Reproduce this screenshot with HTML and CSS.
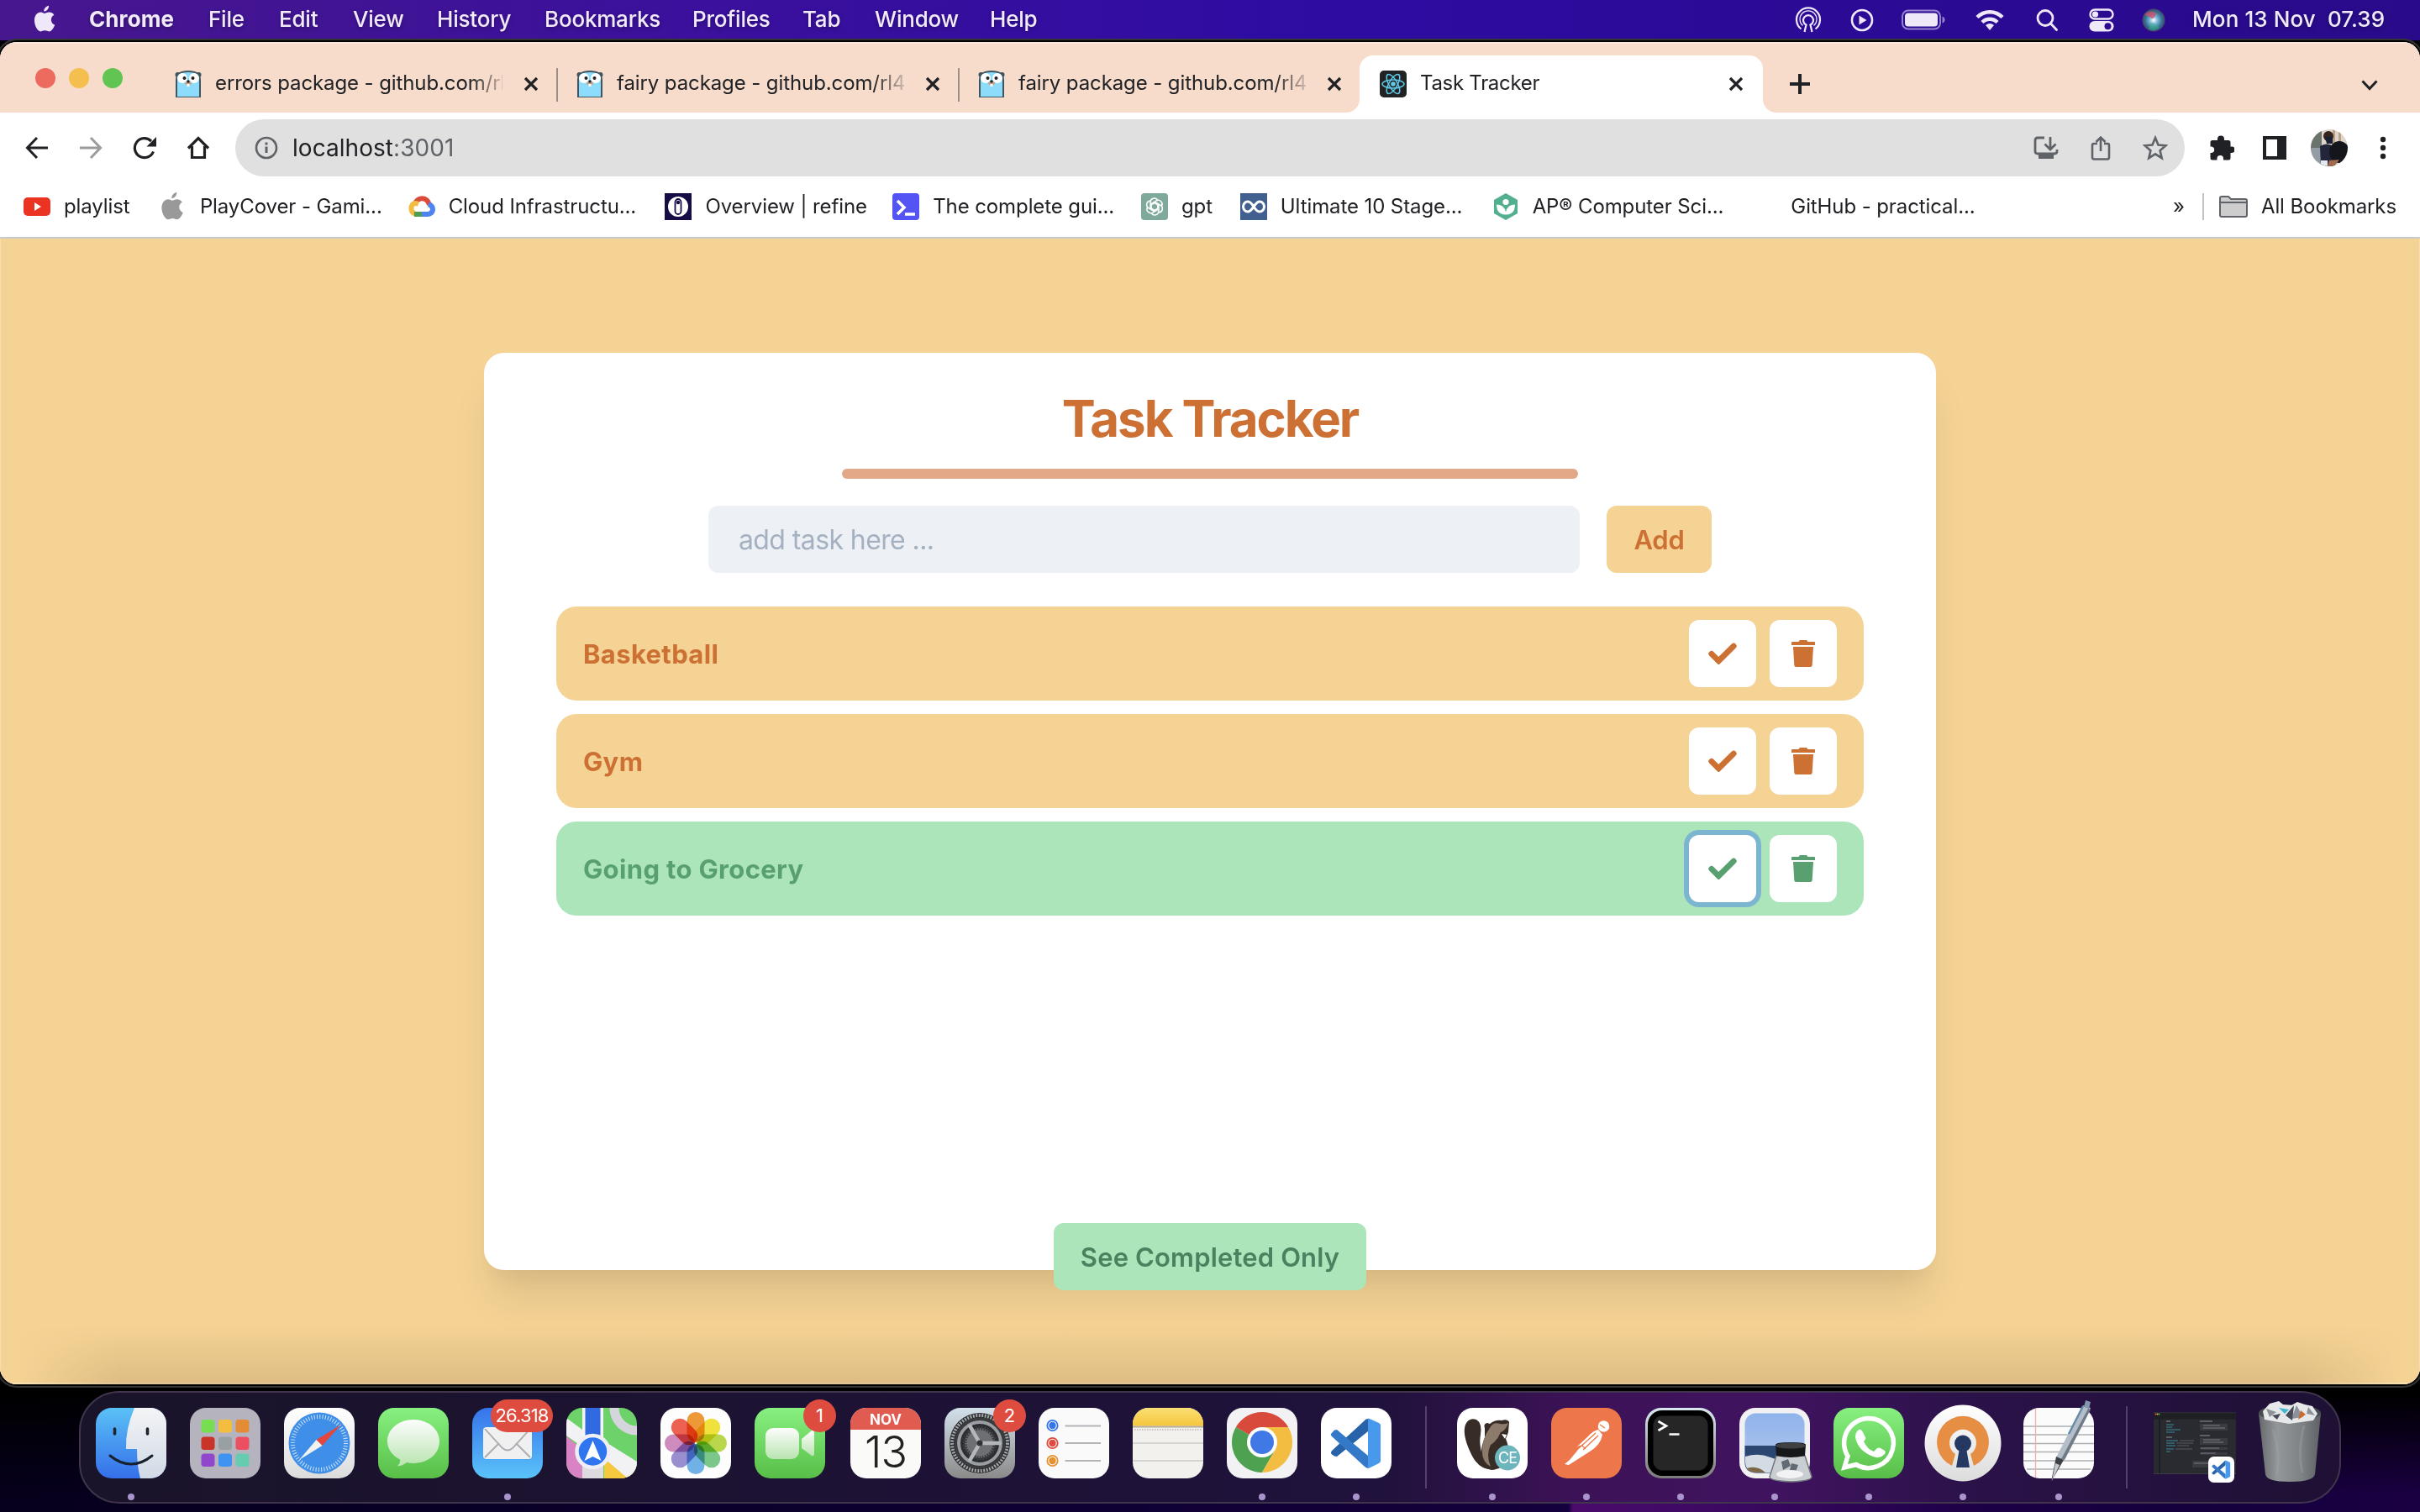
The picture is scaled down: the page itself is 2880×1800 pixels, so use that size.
FILE: index.html
```html
<!DOCTYPE html>
<html lang="en">
<head>
<meta charset="utf-8">
<title>Task Tracker</title>
<link rel="stylesheet" href="styles.css">
</head>
<body>
<svg class="defs" aria-hidden="true">
  <defs>
    <linearGradient id="gGreen" x1="0" y1="0" x2="0" y2="1"><stop offset="0" stop-color="#87f080"/><stop offset="1" stop-color="#58be48"/></linearGradient>
    <linearGradient id="gBlue" x1="0" y1="0" x2="0" y2="1"><stop offset="0" stop-color="#5ac1f6"/><stop offset="1" stop-color="#356fea"/></linearGradient>
    <linearGradient id="gMail" x1="0" y1="0" x2="0" y2="1"><stop offset="0" stop-color="#3674ea"/><stop offset="1" stop-color="#5ac3fa"/></linearGradient>
    <linearGradient id="gWhite" x1="0" y1="0" x2="0" y2="1"><stop offset="0" stop-color="#fff"/><stop offset="1" stop-color="#dcdcdc"/></linearGradient>
    <linearGradient id="gFace" x1="0" y1="0" x2="0" y2="1"><stop offset="0" stop-color="#f4f4f6"/><stop offset="1" stop-color="#d0dae6"/></linearGradient>
    <linearGradient id="gBubble" x1="0" y1="0" x2="0" y2="1"><stop offset="0" stop-color="#fdfdfd"/><stop offset="1" stop-color="#b9e4b0"/></linearGradient>
    <linearGradient id="gGear" x1="0" y1="0" x2="0" y2="1"><stop offset="0" stop-color="#d3e0ea"/><stop offset="1" stop-color="#8b8a8a"/></linearGradient>
    <linearGradient id="gNote" x1="0" y1="0" x2="0" y2="1"><stop offset="0" stop-color="#fadf74"/><stop offset="1" stop-color="#f6c63c"/></linearGradient>
    <linearGradient id="gTerm" x1="0" y1="0" x2="0" y2="1"><stop offset="0" stop-color="#d8e8ee"/><stop offset="1" stop-color="#7d7a7a"/></linearGradient>
    <linearGradient id="gSky" x1="0" y1="0" x2="0" y2="1"><stop offset="0" stop-color="#8fb3ec"/><stop offset="1" stop-color="#b5c8ec"/></linearGradient>
    <linearGradient id="gBin" x1="0" y1="0" x2="1" y2="0"><stop offset="0" stop-color="#66696c"/><stop offset=".3" stop-color="#93979a"/><stop offset=".7" stop-color="#7d8184"/><stop offset="1" stop-color="#5d6064"/></linearGradient>
    <radialGradient id="gSiri" cx=".5" cy=".5" r=".5"><stop offset="0" stop-color="#fff"/><stop offset=".35" stop-color="#7fb6d8"/><stop offset=".75" stop-color="#31708f"/><stop offset="1" stop-color="#4a4464"/></radialGradient>
    <clipPath id="tile"><rect width="84" height="84" rx="19"/></clipPath>
    <clipPath id="disc"><circle cx="22" cy="22" r="22"/></clipPath>
    <symbol id="gopher" viewBox="0 0 32 32">
      <circle cx="3.500" cy="5" r="3" fill="#3f5560"/><circle cx="28.500" cy="5" r="3" fill="#3f5560"/>
      <path d="M2 32V11C2 4 8 1 16 1s14 3 14 10v21z" fill="#8ddcfb" stroke="#3f5560" stroke-width="2"/>
      <circle cx="9" cy="9" r="6" fill="#fff"/><circle cx="23" cy="9" r="6" fill="#fff"/>
      <circle cx="11.500" cy="9" r="2" fill="#222"/><circle cx="21.500" cy="9" r="2" fill="#222"/>
      <ellipse cx="16" cy="15" rx="4" ry="2.500" fill="#c9a48c"/><circle cx="16" cy="13" r="1.700" fill="#222"/><rect x="14.500" y="16" width="3" height="3" fill="#fff"/>
    </symbol>
    <symbol id="cross" viewBox="0 0 18 18"><path d="M2 2l14 14M16 2L2 16" stroke="#202124" stroke-width="3.200"/></symbol>
    <symbol id="apple" viewBox="0 0 28 34"><path d="M19.500 0c.3 3.600-2.700 7.300-6.200 7.300C12.900 3.900 16 .7 19.500 0zM13.900 10c1.300 0 3.200-1.600 6-1.600 2.500 0 4.900 1.300 6.300 3.400-5.500 3.200-4.600 10.700 1 13-1.300 3.500-4.300 8.400-7.200 8.400-2 0-2.900-1.300-5.600-1.300-2.700 0-3.700 1.300-5.600 1.300C5.400 33.200 1 25.700 1 19c0-6.700 4-10.600 8-10.600 2.400 0 3.900 1.600 4.900 1.600z"/></symbol>
    <symbol id="check" viewBox="0 0 32 24"><path d="M3.600 12.300l8 8L28.400 3.600" fill="none" stroke="currentColor" stroke-width="6.500" stroke-linecap="round" stroke-linejoin="miter"/></symbol>
    <symbol id="trash" viewBox="0 0 28 32"><path fill="currentColor" d="M1 2h7.500L10 0h8l1.500 2H27q1 0 1 1v3H0V3q0-1 1-1zM2 8h24l-1.300 22q-.2 2-2.200 2h-17q-2 0-2.200-2z"/></symbol>
    <symbol id="vscode" viewBox="0 0 84 84">
      <path d="M12 53v1q0 1 4 3.500l3 .5L56 28V13q-3 0-5 3L13 51z" fill="#2862a8"/>
      <path d="M16 26.500L12 31q-1 1 1 3l38 35q3 3 5 3V57L19 26z" fill="#3478c8"/>
      <path d="M56 12.500q1 0 3 1l10 4.500q2 1 2 3v42q0 2-2 3l-10 5q-2 1-3 1z" fill="#4899ec"/>
    </symbol>
  </defs>
</svg>

<header class="menubar">
  <svg class="apple" width="26" height="33"><use href="#apple"/></svg>
  <nav class="menus">
    <span class="m1">Chrome</span><span class="m2">File</span><span class="m3">Edit</span><span class="m4">View</span><span class="m5">History</span><span class="m6">Bookmarks</span><span class="m7">Profiles</span><span class="m8">Tab</span><span class="m9">Window</span><span>Help</span>
  </nav>
  <div class="status">
    <svg width="32" height="32" viewBox="0 0 32 32" fill="none" stroke="#efe8f8" stroke-width="2.200"><path d="M11.500 30l2-8.500a6 6 0 1 1 5 0l2 8.500"/><path d="M7.500 26.500a14 14 0 1 1 17 0"/><path d="M9.500 22.500a10 10 0 1 1 13 0" stroke-width="1.200"/></svg>
    <svg class="s2" width="28" height="28" viewBox="0 0 28 28"><circle cx="14" cy="14" r="12" fill="none" stroke="#efe8f8" stroke-width="2.600"/><path d="M10.500 8.500v11l9-5.500z" fill="#efe8f8"/></svg>
    <svg class="s3" width="52" height="26" viewBox="0 0 52 26"><rect x="1" y="1.500" width="45" height="22" rx="7" fill="none" stroke="#9382cc" stroke-width="2"/><rect x="4" y="4.500" width="39" height="16" rx="4" fill="#efe8f8"/><path d="M48.500 8.500q3 1 3 4t-3 4z" fill="#9382cc"/></svg>
    <svg class="s4" width="34" height="26" viewBox="0 0 34 26" fill="none" stroke="#efe8f8" stroke-width="4.500"><path d="M2 9.500a21 21 0 0 1 30 0M8 15.500a12.600 12.600 0 0 1 18 0"/><path d="M12 19q5-4 10 0l-5 6z" fill="#efe8f8" stroke="none"/></svg>
    <svg class="s5" width="26" height="26" viewBox="0 0 26 26" fill="none" stroke="#efe8f8" stroke-width="2.800"><circle cx="11" cy="10.500" r="9"/><path d="M17.500 17l7 7.500" stroke-linecap="round"/></svg>
    <svg class="s6" width="30" height="28" viewBox="0 0 30 28"><rect x="1.500" y="1.500" width="27" height="11" rx="5.500" fill="none" stroke="#efe8f8" stroke-width="2.400"/><circle cx="7.500" cy="7" r="3.600" fill="#efe8f8"/><rect x=".5" y="15" width="29" height="12.500" rx="6.200" fill="#efe8f8"/><circle cx="22.500" cy="21.200" r="4" fill="#2c0a90"/></svg>
    <svg class="s7" width="28" height="28" viewBox="0 0 28 28"><circle cx="14" cy="14" r="13.500" fill="url(#gSiri)"/><path d="M3 8q8-8 14-2-2 6-5 6-5-4-9-4z" fill="#d84a68" opacity=".75"/><path d="M10 17q6 0 11 6-7 6-13 1z" fill="#2fb68a" opacity=".5"/></svg>
    <span class="clock">Mon 13 Nov&nbsp; 07.39</span>
  </div>
</header>

<main class="window">
  <div class="tabstrip">
    <div class="lights"><i class="red"></i><i class="yellow"></i><i class="green"></i></div>
    <div class="tab"><svg width="32" height="32"><use href="#gopher"/></svg><span class="fade">errors package - github.com/rl4</span><svg width="18" height="18"><use href="#cross"/></svg></div>
    <i class="divider"></i>
    <div class="tab"><svg width="32" height="32"><use href="#gopher"/></svg><span class="fade">fairy package - github.com/rl4</span><svg width="18" height="18"><use href="#cross"/></svg></div>
    <i class="divider"></i>
    <div class="tab last"><svg width="32" height="32"><use href="#gopher"/></svg><span class="fade">fairy package - github.com/rl4</span><svg width="18" height="18"><use href="#cross"/></svg></div>
    <div class="tab active">
      <svg width="32" height="32" viewBox="0 0 32 32"><rect width="32" height="32" rx="5" fill="#212224"/><g fill="none" stroke="#61c9e8" stroke-width="1.500"><ellipse cx="16" cy="16" rx="13" ry="5"/><ellipse cx="16" cy="16" rx="13" ry="5" transform="rotate(60 16 16)"/><ellipse cx="16" cy="16" rx="13" ry="5" transform="rotate(120 16 16)"/></g><circle cx="16" cy="16" r="2.800" fill="#61c9e8"/></svg>
      <span>Task Tracker</span><svg width="18" height="18"><use href="#cross"/></svg>
    </div>
    <svg class="plus" width="24" height="24"><path d="M12 0v24M0 12h24" stroke="#202124" stroke-width="4"/></svg>
    <svg class="chev" width="20" height="13" fill="none" stroke="#202124" stroke-width="3"><path d="M1.500 1.500L10 10.500l8.500-9"/></svg>
  </div>

  <div class="toolbar">
    <svg width="28" height="28" fill="none" stroke="#202124" stroke-width="3"><path d="M14 2L2.500 14 14 26M2 14h25"/></svg>
    <svg width="28" height="28" fill="none" stroke="#9b9c9e" stroke-width="3"><path d="M14 2l11.500 12L14 26M1 14h25"/></svg>
    <svg width="28" height="28" fill="none" stroke="#202124" stroke-width="3.200"><path d="M24.500 18.500A11.500 11.500 0 1 1 22 6"/><path d="M28 1v11.500H16.500z" fill="#202124" stroke="none"/></svg>
    <svg width="28" height="28" fill="none" stroke="#202124" stroke-width="3.200"><path d="M2 14.500L14 2.500l12 12M6.500 12v13.500h15V12"/></svg>
    <div class="omnibox">
      <svg width="28" height="28"><circle cx="14" cy="14" r="12" fill="none" stroke="#5f6368" stroke-width="2.600"/><path d="M14 12.500V20M14 7.500v3" stroke="#5f6368" stroke-width="3"/></svg>
      <span class="url">localhost<em>:3001</em></span>
      <svg class="oi" width="30" height="30" fill="none" stroke="#5f6368" stroke-width="2.800"><path d="M13 3H5Q2 3 2 6v13q0 3 3 3h20q3 0 3-3v-2"/><path d="M20 2v14M13.500 10.500l6.500 6.500 6.500-6.500"/><path d="M6 23h18v5H6z" fill="#5f6368" stroke="none"/></svg>
      <svg class="oi" width="24" height="30" fill="none" stroke="#5f6368" stroke-width="2.600"><path d="M8 10H4q-2 0-2 2v14q0 2.500 2 2.500h16q2 0 2-2.500V12q0-2-2-2h-4M12 19V3M6.500 8L12 2.500 17.500 8"/></svg>
      <svg class="oi" width="30" height="30" viewBox="0 0 30 30" fill="none" stroke="#5f6368" stroke-width="2.600"><path d="M15 3l3.500 8.500 9 .8-6.900 6 2.100 8.900-7.700-4.800-7.700 4.800 2.100-8.900-6.900-6 9-.8z"/></svg>
    </div>
    <svg class="t1" width="30" height="30" viewBox="0 0 30 30"><path fill="#202124" d="M10 4.500a4 4 0 0 1 8 0V6h5q2.500 0 2.500 2.500v5H27a3.700 3.700 0 0 1 0 7.500h-1.500v6q0 2.500-2.500 2.500h-6v-1.700a3.700 3.700 0 0 0-7.500 0v1.700H4Q1.500 29.500 1.500 27v-6H3a3.800 3.800 0 0 0 0-7.500H1.500v-5Q1.500 6 4 6h6z"/></svg>
    <svg class="t2" width="28" height="28"><path fill="#202124" fill-rule="evenodd" d="M0 0h28v28H0zM4 4v20h13V4z"/></svg>
    <svg class="t3" width="44" height="44"><g clip-path="url(#disc)"><rect width="44" height="44" fill="#ded6cc"/><rect width="13" height="24" fill="#6b746c"/><rect y="22" width="12" height="22" fill="#949ca4"/><path d="M26 0h3v18h-3zM33 0h3v18h-3z" fill="#b99f84"/><path d="M11 20q8-5 16 0l2 24H12z" fill="#23263a"/><circle cx="21" cy="8" r="6" fill="#33241e"/><path d="M17 9h9v8h-7z" fill="#1a2034"/><ellipse cx="34" cy="27" rx="12" ry="13" fill="#15161c"/><path d="M22 37l12-1-6 8h-8z" fill="#a26b50"/><path d="M12 37h8v7h-8z" fill="#e4e8f0"/></g></svg>
    <svg class="t4" width="8" height="28"><g fill="#202124"><circle cx="4" cy="4" r="3.200"/><circle cx="4" cy="14" r="3.200"/><circle cx="4" cy="24" r="3.200"/></g></svg>
  </div>

  <div class="bookmarks">
    <div class="bm b1"><svg width="32" height="32"><rect y="5" width="32" height="22" rx="5" fill="#ea3323"/><path d="M13 11v10l8-5z" fill="#fff"/></svg><span>playlist</span></div>
    <div class="bm b2"><svg width="32" height="34" fill="#999"><use href="#apple" x="1" width="28" height="33"/></svg><span>PlayCover - Gami...</span></div>
    <div class="bm b3"><svg width="32" height="32" fill="none" stroke-width="6"><path d="M8.500 11.500A8.500 8.500 0 0 1 23 9.500l2 4" stroke="#da4b3a"/><path d="M12 13q-7-3-8.500 4-.5 6 5 8" stroke="#f2bc42"/><path d="M7 25h9" stroke="#4f9d55"/><path d="M16 25h7q6-1 6-6 0-4-5-6" stroke="#4d84ee"/></svg><span>Cloud Infrastructu...</span></div>
    <div class="bm b4"><svg width="32" height="32"><rect width="32" height="32" fill="#170d44"/><circle cx="16" cy="16" r="12" fill="#fff"/><rect x="12.500" y="7" width="7" height="18" rx="3.500" fill="#fff" stroke="#170d44" stroke-width="1.800"/><circle cx="16" cy="11" r="2.200" fill="#170d44"/></svg><span>Overview | refine</span></div>
    <div class="bm b5"><svg width="32" height="32"><rect width="32" height="32" rx="4" fill="#5454f4"/><path d="M6 9l8 8-8 8M15 25h12" fill="none" stroke="#fff" stroke-width="3.600"/></svg><span>The complete gui...</span></div>
    <div class="bm b6"><svg width="32" height="32"><rect width="32" height="32" rx="4" fill="#7fa99b"/><g fill="none" stroke="#fff" stroke-width="1.500"><path id="petal" d="M16 20.500l-5-3v-7a4.700 4.700 0 0 1 8.500-2.500"/><use href="#petal" transform="rotate(60 16 16)"/><use href="#petal" transform="rotate(120 16 16)"/><use href="#petal" transform="rotate(180 16 16)"/><use href="#petal" transform="rotate(240 16 16)"/><use href="#petal" transform="rotate(300 16 16)"/></g></svg><span>gpt</span></div>
    <div class="bm b7"><svg width="32" height="32"><rect width="32" height="32" fill="#41608f"/><path d="M16 16c-3-5-5-6-7-6a5.500 6 0 0 0 0 12c3 0 4-2 7-6s4-6 7-6a5.500 6 0 0 1 0 12c-2 0-4-1-7-6z" fill="none" stroke="#fff" stroke-width="3"/></svg><span>Ultimate 10 Stage...</span></div>
    <div class="bm b8"><svg width="32" height="32"><path d="M16 0l14 8v16l-14 8L2 24V8z" fill="#53b08f"/><circle cx="16" cy="10.500" r="3.600" fill="#fff"/><path d="M5 13.500q9 0 11 9 2-9 11-9 0 12-11 12T5 13.500z" fill="#fff"/></svg><span>AP® Computer Sci...</span></div>
    <div class="bm b9"><span>GitHub - practical...</span></div>
    <span class="more">»</span>
    <i class="bsep"></i>
    <div class="bm b10"><svg width="34" height="26"><path d="M1 23V3q0-2 2-2h8l3 3h17q2 0 2 2v17q0 2-2 2H3q-2 0-2-2z" fill="#cdcdcd" stroke="#5f6368" stroke-width="2"/><path d="M2 8h30" stroke="#5f6368" stroke-width="2"/></svg><span>All Bookmarks</span></div>
  </div>

  <section class="page">
    <div class="card">
      <h1>Task Tracker</h1>
      <div class="rule"></div>
      <form class="entry">
        <input class="field" type="text" placeholder="add task here ...">
        <button class="add" type="button">Add</button>
      </form>
      <ul class="tasks">
        <li class="task"><span>Basketball</span><button type="button"><svg width="34" height="26"><use href="#check"/></svg></button><button type="button"><svg width="28" height="32"><use href="#trash"/></svg></button></li>
        <li class="task"><span>Gym</span><button type="button"><svg width="34" height="26"><use href="#check"/></svg></button><button type="button"><svg width="28" height="32"><use href="#trash"/></svg></button></li>
        <li class="task done"><span>Going to Grocery</span><button class="focused" type="button"><svg width="34" height="26"><use href="#check"/></svg></button><button type="button"><svg width="28" height="32"><use href="#trash"/></svg></button></li>
      </ul>
      <button class="filter" type="button">See Completed Only</button>
    </div>
  </section>
</main>

<footer class="dock">
  <div class="app open"><svg viewBox="0 0 84 84"><g clip-path="url(#tile)"><rect width="84" height="84" fill="url(#gBlue)"/><path d="M46 0Q35 26 36 49h13q0 20 4 35h31V0z" fill="url(#gFace)"/></g><path d="M22.500 25v6M61.500 25v6" stroke="#1c2530" stroke-width="3.600" stroke-linecap="round"/><path d="M17 57q25 20 50 0" fill="none" stroke="#17202c" stroke-width="3" stroke-linecap="round"/></svg></div>
  <div class="app"><svg viewBox="0 0 84 84"><rect width="84" height="84" rx="19" fill="#b5b3bd"/><g><rect x="13.500" y="14" width="16" height="15.500" rx="3.500" fill="#77de52"/><rect x="34" y="14" width="16" height="15.500" rx="3.500" fill="#f3be3f"/><rect x="54.500" y="14" width="16" height="15.500" rx="3.500" fill="#e48b35"/><rect x="13.500" y="34.500" width="16" height="15.500" rx="3.500" fill="#c93328"/><rect x="34" y="34.500" width="16" height="15.500" rx="3.500" fill="#99a0a4"/><rect x="54.500" y="34.500" width="16" height="15.500" rx="3.500" fill="#ec5060"/><rect x="13.500" y="54.500" width="16" height="15.500" rx="3.500" fill="#9147cb"/><rect x="34" y="54.500" width="16" height="15.500" rx="3.500" fill="#3f94f2"/><rect x="54.500" y="54.500" width="16" height="15.500" rx="3.500" fill="#65ccb0"/></g></svg></div>
  <div class="app"><svg viewBox="0 0 84 84"><rect width="84" height="84" rx="19" fill="url(#gWhite)"/><circle cx="42" cy="42" r="36.500" fill="#3f8fe8"/><circle cx="42" cy="42" r="31.500" fill="none" stroke="#cfe4fa" stroke-width="5" stroke-dasharray="1 2.300"/><path d="M68 20L38.500 38l7 7z" fill="#e5463b"/><path d="M18 62l20.500-24 7 7z" fill="#f2f2f2"/></svg></div>
  <div class="app"><svg viewBox="0 0 84 84"><rect width="84" height="84" rx="19" fill="url(#gGreen)"/><path d="M42 14c17 0 31 11 31 26S59 66 42 66q-4 0-8-1-5 4-11 4.500 4-4 3-8C17 57 11 49 11 40c0-15 14-26 31-26z" fill="url(#gBubble)"/></svg></div>
  <div class="app open"><svg viewBox="0 0 84 84"><rect width="84" height="84" rx="19" fill="url(#gMail)"/><rect x="13" y="23" width="58" height="38" rx="4" fill="#f0f0f0"/><path d="M15 59l17-17M69 59L52 42M15 25l21 23q6 5 12 0l21-23" fill="none" stroke="#a9acb0" stroke-width="1.800"/></svg><span class="badge wide">26.318</span></div>
  <div class="app"><svg viewBox="0 0 84 84"><g clip-path="url(#tile)"><rect width="84" height="84" fill="#6ed26b"/><path d="M0 34l30 24v26H0z" fill="#d883c4"/><path d="M45 84l22-20 17 12v8z" fill="#f4c93f"/><path d="M0 12l84 62v-20L44 22z" fill="none"/><path d="M0 12l19 14 33 18 32 20v20H73L0 33z" fill="#f2f1f4"/><path d="M45 84V60l28 24z" fill="#f4c93f"/><path d="M19 50h25v34H19z" fill="#dcdbe0"/><path d="M19 0h25v60H19z" fill="#f5f5f7"/><path d="M22.500 0h18v50h-18z" fill="#3069e0"/><circle cx="84" cy="0" r="27" fill="none" stroke="#d5d5dc" stroke-width="11"/><circle cx="31.500" cy="52" r="19" fill="#2f75f0" stroke="#eeeef4" stroke-width="4.500"/><path d="M31.500 39l10 24-10-5-10 5z" fill="#fff"/></g></svg></div>
  <div class="app"><svg viewBox="0 0 84 84"><rect width="84" height="84" rx="19" fill="#fdfdfd"/><g class="petals"><rect x="31.500" y="5" width="21" height="36" rx="10.500" fill="#f09a37"/><rect x="31.500" y="5" width="21" height="36" rx="10.500" fill="#f2e33c" transform="rotate(45 42 42)"/><rect x="31.500" y="5" width="21" height="36" rx="10.500" fill="#bcd84a" transform="rotate(90 42 42)"/><rect x="31.500" y="5" width="21" height="36" rx="10.500" fill="#7cc98a" transform="rotate(135 42 42)"/><rect x="31.500" y="5" width="21" height="36" rx="10.500" fill="#72b4e8" transform="rotate(180 42 42)"/><rect x="31.500" y="5" width="21" height="36" rx="10.500" fill="#9a90d2" transform="rotate(225 42 42)"/><rect x="31.500" y="5" width="21" height="36" rx="10.500" fill="#cf8cc0" transform="rotate(270 42 42)"/><rect x="31.500" y="5" width="21" height="36" rx="10.500" fill="#ee6250" transform="rotate(315 42 42)"/></g></svg></div>
  <div class="app"><svg viewBox="0 0 84 84"><rect width="84" height="84" rx="19" fill="url(#gGreen)"/><rect x="13" y="24" width="40" height="37" rx="9" fill="url(#gBubble)"/><path d="M56 37l12-10q3-1 3 2v26q0 3-3 2L56 48z" fill="url(#gBubble)"/></svg><span class="badge">1</span></div>
  <div class="app nudge"><div class="calendar"><b>NOV</b><span>13</span></div></div>
  <div class="app"><svg viewBox="0 0 84 84"><rect width="84" height="84" rx="19" fill="url(#gGear)"/><circle cx="42" cy="42" r="36" fill="#2a2c2e"/><circle cx="42" cy="42" r="33" fill="none" stroke="#a2a6aa" stroke-width="4" stroke-dasharray="2 1.500"/><circle cx="42" cy="42" r="29" fill="none" stroke="#3a3c3e" stroke-width="3"/><circle cx="42" cy="42" r="25" fill="none" stroke="#9a9ea2" stroke-width="4"/><circle cx="42" cy="42" r="18" fill="#6d6f72" stroke="#3a3d40" stroke-width="5" stroke-dasharray="2 1.300"/><path d="M42 42h25M42 42L29.500 20.300M42 42L29.500 63.700" stroke="#b4b8bc" stroke-width="4.500"/><circle cx="42" cy="42" r="3.500" fill="#333"/></svg><span class="badge">2</span></div>
  <div class="app"><svg viewBox="0 0 84 84"><rect width="84" height="84" rx="19" fill="#fafafa"/><g stroke-width="1.800" fill="none"><circle cx="16.500" cy="21" r="6.200" stroke="#3577e8"/><circle cx="16.500" cy="42" r="6.200" stroke="#e14b3d"/><circle cx="16.500" cy="63" r="6.200" stroke="#e5922f"/></g><circle cx="16.500" cy="21" r="4.200" fill="#3577e8"/><circle cx="16.500" cy="42" r="4.200" fill="#e14b3d"/><circle cx="16.500" cy="63" r="4.200" fill="#e5922f"/><path d="M31.500 21.500H74M31.500 42H74M31.500 63H74" stroke="#b4b4b8" stroke-width="2"/></svg></div>
  <div class="app"><svg viewBox="0 0 84 84"><g clip-path="url(#tile)"><rect width="84" height="84" fill="#f2f1ee"/><rect width="84" height="21.500" fill="url(#gNote)"/><rect y="21.500" width="84" height="2" fill="#b5ad98"/><path d="M2 26h80" stroke="#b5b5b2" stroke-width="1.500" stroke-dasharray="1.500 1.500"/><path d="M0 42h84M0 63h84" stroke="#d5d4d2" stroke-width="1.800"/></g></svg></div>
  <div class="app open"><svg viewBox="0 0 84 84"><rect width="84" height="84" rx="19" fill="#f2f2f4"/><path d="M42 41L10.800 23a36 36 0 0 1 62.400 0z" fill="#d84a3c"/><path d="M42 41L10.800 23A36 36 0 0 0 42 77l15.600-27z" fill="#4fa152"/><path d="M42 23h31.200A36 36 0 0 1 42 77l15.600-27z" fill="#f3bd42"/><circle cx="42" cy="41" r="18" fill="#fff"/><circle cx="42" cy="41" r="14" fill="#4079e6"/></svg></div>
  <div class="app open"><svg viewBox="0 0 84 84"><rect width="84" height="84" rx="19" fill="#fff"/><use href="#vscode" width="84" height="84"/></svg></div>
  <i class="bar bar1"></i>
  <div class="app open"><svg viewBox="0 0 84 84"><rect width="84" height="84" rx="19" fill="#fff"/><path d="M10 20q4-9 13-6 7 4 5 18-3 15 7 38l5 3q-16 0-25-22-9-20-5-31z" fill="#382c26"/><path d="M33 24q-2-5 3-6l3 1q6-5 14-4 7-2 9 2l-1 12-3 8q6 14 1 24-3 12-18 13-12-2-12-16-1-12 4-22z" fill="#382c26"/><path d="M39 24q4-8 12-5 6 1 10-1-3 9-9 11-4 10-12 15-6 12 0 26-11-6-10-20 0-14 9-26z" fill="#8c7a6b"/><path d="M53 31l6 1-2 5z" fill="#fff"/><circle cx="60" cy="59.500" r="15" fill="#6cb5bd"/></svg><span class="ce">CE</span></div>
  <div class="app open"><svg viewBox="0 0 84 84"><rect width="84" height="84" rx="19" fill="#ed764a"/><circle cx="62.500" cy="22" r="6.800" fill="#fff"/><path d="M56 26l5 6q-2 12-15 20L21 68l-5-1 6-5 14-17q-2-1-6 2l14-13q6-7 12-8z" fill="#fff"/><path d="M33 48l20-18M38 50l18-17M58 20l6 4M36 44l5 5" stroke="#ed764a" stroke-width="1.300"/></svg></div>
  <div class="app open"><svg viewBox="0 0 84 84"><rect width="84" height="84" rx="19" fill="url(#gTerm)"/><rect x="3" y="3" width="78" height="78" rx="17" fill="#000"/><rect x="9.500" y="9.500" width="65" height="65" rx="11" fill="#262626"/><path d="M15.500 16l9.500 5.500-9.500 5.500M28.500 31.500h12" fill="none" stroke="#fff" stroke-width="2.600"/></svg></div>
  <div class="app open"><svg viewBox="0 0 84 84" overflow="visible"><rect width="84" height="84" rx="19" fill="#f1f0f2"/><rect x="6.500" y="6.500" width="71" height="71" rx="13" fill="url(#gSky)"/><path d="M6.500 45h71v20q0 12-13 12.500H20Q6.500 77 6.500 65z" fill="#2c4672"/><path d="M7 58q16-5 30 1t26-2l-10 20H20Q8 77 7 65z" fill="#d3dbe4"/><path d="M9 72q12-4 22 5H20q-8 0-11-5z" fill="#7c6746"/><path d="M44 57h34l8 25q0 5-24 6-26-1-26-6z" fill="#c9ced2" stroke="#73777b" stroke-width="1.500"/><path d="M50 64l8-3 3 8-9 5zM62 66l8 2-3 8-7-2z" fill="#626a74"/><ellipse cx="60" cy="79" rx="16" ry="5" fill="#f2f3f4"/><path d="M43 44q0-3 18-3t18 3l-1 13q-17 4-34 0z" fill="#17181a"/><ellipse cx="61" cy="45" rx="18" ry="3.500" fill="#3e4042"/></svg></div>
  <div class="app open"><svg viewBox="0 0 84 84"><rect width="84" height="84" rx="19" fill="url(#gGreen)"/><path d="M42 12.500A29.500 29.500 0 0 0 17 57.500L13 71l14-3.500a29.500 29.500 0 1 0 15-55z" fill="none" stroke="#fff" stroke-width="5.500"/><path d="M30 26q3-1 5 3l3 6q1 2-2 5 4 9 12 12l4-4q2-1 4 0l5 3q2 2-1 5-5 5-13 2Q29 51 26 35q0-6 4-9z" fill="#fff"/></svg></div>
  <div class="app open"><svg viewBox="0 0 84 84" overflow="visible"><circle cx="42" cy="42" r="45.500" fill="url(#gWhite)"/><path d="M29 69a31 31 0 1 1 26 0l-4-14a16 16 0 1 0-18 0z" fill="#e68e43"/><circle cx="42" cy="42.500" r="10" fill="#253862"/><path d="M38 48h8l4 23H34z" fill="#253862"/></svg></div>
  <div class="app open nudge"><svg viewBox="0 0 84 84" overflow="visible"><rect width="84" height="84" rx="19" fill="#fbfbfb"/><path d="M0 22h84M0 32h84M0 42.500h84M0 52.500h84M0 63h84M4 73h76" stroke="#aeb0b3" stroke-width="1.600"/><path d="M14.500 1v82" stroke="#f2b0aa" stroke-width="1.300"/><path d="M71-3l9 3-32 62-9-3z" fill="#b3bec8"/><path d="M74-9l6 2-2 8-6-2z" fill="#8398a8"/><path d="M77 1l3 1-31 60-4-1z" fill="#6f7c88"/><path d="M71-2L54 31" stroke="#648ba8" stroke-width="2.500"/><path d="M39 58l9 4-15 26z" fill="#3c4146"/><path d="M38 66l5 2-9 19z" fill="#c5cacf"/></svg></div>
  <i class="bar bar2"></i>
  <div class="mini">
    <svg width="98" height="74"><rect width="98" height="74" fill="#292b31"/><path d="M0 5h98" stroke="#1d1f23" stroke-width="7"/><path d="M7 8v66" stroke="#1d1f23" stroke-width="2"/><circle cx="2.500" cy="2.500" r="1" fill="#e4564c"/><circle cx="4.500" cy="2.500" r="1" fill="#e8b23e"/><circle cx="6.500" cy="2.500" r="1" fill="#51b64b"/><path d="M15 11h5M55 11h15M15 30h7M55 28h12" stroke="#90949b"/><path d="M15 15h9M15 18h7M15 21h17M15 24h10M15 34h14M15 37h10M15 40h11M15 44h9M15 47h5" stroke="#3f8798" stroke-width="1.100"/><path d="M31 34h17M27 37h20M28 40h14M26 44h20" stroke="#585c64"/><path d="M55 14h33v8H55zM55 31h33v8H55zM55 42h33v3H55zM55 48h33v3H55zM46 58h22v8H46z" fill="#393b41"/><path d="M59 16h20M59 19h26M59 33h20M59 36h24M56 43h22M56 49h18M48 61h18" stroke="#777b83"/><path d="M0 73.500h98" stroke="#3a3d44"/></svg>
    <svg class="mark" width="31" height="31" viewBox="0 0 84 84"><rect width="84" height="84" rx="18" fill="#fff"/><use href="#vscode" width="84" height="84"/></svg>
  </div>
  <svg class="trash" width="76" height="98" viewBox="0 0 76 98"><path d="M1 15h74L68 88q-2 9-30 9T9 88z" fill="url(#gBin)"/><ellipse cx="38" cy="15" rx="37" ry="10" fill="#484b50"/><path d="M6 13L14 4l11-3 5 4 10 1 7-4 9 3 9 2 6 9-5 8-29 4-29-5z" fill="#e7e8e9"/><path d="M10 10l12 4-8 6zM46 6l8 14-14 2zM60 8l8 10-10-2z" fill="#8c929a"/><path d="M25 9l12 2-5 5z" fill="#43b7cf"/><path d="M51 12l6 5-9 6z" fill="#c96a30"/><path d="M33 18l10-12-2 18zM17 18l10-2-4 7z" fill="#474b55"/><path d="M18 35q10 30 4 54M55 30q-8 30-2 56" stroke="#a2a7aa" stroke-width="3" fill="none" opacity=".35"/></svg>
</footer>
</body>
</html>
```
FILE: styles.css
```css
* { box-sizing: border-box; }
body {
  margin: 0;
  width: 2880px;
  height: 1800px;
  overflow: hidden;
  display: flex;
  flex-direction: column;
  font-family: Inter, "Liberation Sans", sans-serif;
  background:
    linear-gradient(180deg, #000 0, #000 1660px, transparent 1780px),
    linear-gradient(90deg, #06001c, #0b002c 30%, #14003c 64.800%, #4a0b6c 65%, #3a0860 72%, #1c0046 82%, #14003c 90%, #1a0042);
}
svg { display: block; flex: none; }
i { font-style: normal; }
button, input { font: inherit; border: 0; padding: 0; }
.defs { position: absolute; width: 0; height: 0; }

/* menu bar */
.menubar {
  flex: none;
  height: 50px;
  border-bottom: 2px solid #06000f;
  display: flex;
  padding: 0 38px 3px 40px;
  color: #f1ebf9;
  font-size: 26px;
  font-weight: 500;
  line-height: 45px;
  letter-spacing: -.2px;
  white-space: nowrap;
  text-shadow: 0 2px 5px rgba(0, 0, 0, .3);
  background: linear-gradient(90deg, #47178e, #3a109d 30%, #2e0ca2 55%, #2b0a96 75%, #290b8a);
}
.apple { margin: 6px 40px 0 0; fill: #efe8f8; }
.menus { display: flex; }
.m1 { width: 142px; font-weight: 700; letter-spacing: .1px; }
.m2 { width: 84px; }
.m3 { width: 88px; }
.m4 { width: 100px; }
.m5 { width: 128px; }
.m6 { width: 176px; }
.m7 { width: 131px; }
.m8 { width: 86px; }
.m9 { width: 137px; }
.status { margin-left: auto; display: flex; align-items: center; padding-top: 3px; }
.s2 { margin-left: 34px; }
.s3 { margin-left: 33px; }
.s4 { margin-left: 36px; }
.s5 { margin-left: 38px; }
.s6 { margin-left: 37px; }
.s7 { margin-left: 33px; }
.clock { margin: -3px 0 0 32px; width: 233px; letter-spacing: .1px; }

/* browser window */
.window {
  flex: none;
  height: 1598px;
  display: flex;
  flex-direction: column;
  border-radius: 20px;
  overflow: hidden;
  background: #fff;
  box-shadow: 0 0 0 2px #000, 0 0 0 4px #333;
}
.tabstrip {
  flex: none;
  height: 84px;
  display: flex;
  padding: 14px 50px 0 42px;
  background: #f7dccc;
  border-top: 2px solid #fae8de;
  font-size: 24px;
  color: #202124;
}
.lights { display: flex; gap: 16px; width: 166px; padding-top: 15px; }
.lights i { width: 24px; height: 24px; border-radius: 50%; }
.red { background: #ed6a5e; }
.yellow { background: #f5bf4f; }
.green { background: #61c554; }
.tab { display: flex; align-items: center; width: 454px; height: 68px; padding-bottom: 0; line-height: 64px; white-space: nowrap; }
.tab span { margin: -2px 25px 0 16px; width: 342px; overflow: hidden; letter-spacing: -.1px; }
.fade { -webkit-mask-image: linear-gradient(90deg, #000 305px, transparent 350px); mask-image: linear-gradient(90deg, #000 305px, transparent 350px); }
.divider { width: 2px; height: 40px; margin: 15px 22px 0 0; background: #9c8f86; }
.tab.active {
  position: relative;
  width: 480px;
  padding-left: 24px;
  border-radius: 16px 16px 0 0;
  background: #fff;
}
.tab.active::before, .tab.active::after {
  content: "";
  position: absolute;
  bottom: 0;
  width: 16px;
  height: 16px;
}
.tab.active::before { left: -16px; background: radial-gradient(circle at 0 0, transparent 15.500px, #fff 16.500px); }
.tab.active::after { right: -16px; background: radial-gradient(circle at 100% 0, transparent 15.500px, #fff 16.500px); }
.tab.active span { letter-spacing: -.3px; }
.plus { margin: 22px 0 0 32px; }
.chev { margin: 29px 0 0 auto; }

.toolbar { flex: none; height: 84px; display: flex; align-items: center; padding: 0 40px 0 30px; }
.toolbar > svg { margin-right: 36px; }
.omnibox { display: flex; align-items: center; width: 2320px; height: 68px; margin-left: -6px; padding: 0 20px 0 23px; border-radius: 34px; background: #e0e0e0; }
.url { margin: 0 auto 0 17px; font-size: 28px; letter-spacing: .05px; color: #202124; }
.url em { font-style: normal; color: #5f6368; }
.oi { margin-left: 38px; }
.toolbar > .t1 { margin: 0 34px 0 29px; }
.toolbar > .t2 { margin-right: 29px; }
.toolbar > .t3 { margin-right: 38px; }
.toolbar > .t4 { margin: 0; }

.bookmarks { flex: none; height: 66px; display: flex; align-items: center; padding: 0 28px 9px 28px; font-size: 24px; letter-spacing: -.1px; color: #202124; white-space: nowrap; border-bottom: 2px solid #c6cbd0; }
.bm { display: flex; align-items: center; gap: 16px; }
.b1 { width: 162px; }
.b2 { width: 296px; }
.b3 { width: 306px; }
.b4 { width: 271px; }
.b5 { width: 296px; }
.b6 { width: 118px; }
.b7 { width: 300px; }
.b8 { width: 356px; }
.b9 { width: 455px; }
.more { width: 35px; }
.bsep { width: 2px; height: 32px; margin-right: 18px; background: #c0c3c6; }

/* task page */
.page {
  flex: 1;
  position: relative;
  padding-top: 136px;
  background: #f5d395;
  border: solid #f8dfb0;
  border-width: 0 1px 2px;
}
.page::after {
  content: "";
  position: absolute;
  left: 20px;
  right: 20px;
  bottom: -2px;
  height: 70px;
  background: linear-gradient(180deg, transparent, rgba(100, 75, 40, .16));
  -webkit-mask-image: linear-gradient(90deg, transparent, #000 120px, #000 2720px, transparent);
  mask-image: linear-gradient(90deg, transparent, #000 120px, #000 2720px, transparent);
}
.card {
  width: 1728px;
  height: 1092px;
  margin: 0 auto;
  padding-top: 42px;
  display: flex;
  flex-direction: column;
  align-items: center;
  border-radius: 24px;
  background: #fff;
  box-shadow: 0 40px 50px -10px rgba(0, 0, 0, .1), 0 20px 20px -10px rgba(0, 0, 0, .04);
}
h1 { margin: 0; font-size: 60px; font-weight: 700; line-height: 72px; letter-spacing: -2.050px; color: #cc7033; }
.rule { width: 876px; height: 12px; margin-top: 24px; border-radius: 6px; background: #e2a988; }
.entry { display: flex; gap: 32px; margin-top: 32px; width: 1194px; }
.field { width: 1037px; height: 80px; padding: 0 36px; border-radius: 12px; background: #edf1f6; font-size: 32px; letter-spacing: -.6px; }
.field::placeholder { color: #a5b1c1; opacity: 1; }
.add { width: 125px; height: 80px; border-radius: 12px; background: #f5d395; color: #cc7033; font-size: 31px; font-weight: 600; letter-spacing: -.3px; }
.tasks { list-style: none; display: flex; flex-direction: column; gap: 16px; margin: 40px 0 auto; padding: 0; width: 1556px; }
.task { display: flex; align-items: center; gap: 16px; height: 112px; padding: 0 32px; border-radius: 24px; background: #f5d395; color: #cc7033; font-size: 31px; font-weight: 700; letter-spacing: .35px; }
.task span { flex: 1; }
.task button { display: flex; align-items: center; justify-content: center; width: 80px; height: 80px; border-radius: 12px; background: #fff; color: inherit; }
.task.done { background: #ace5b9; color: #59a070; }
.task .focused { box-shadow: 0 0 0 6px #7bb5cf; }
.filter { width: 372px; height: 80px; margin-bottom: -24px; border-radius: 12px; background: #ace5b9; color: #4a8260; font-size: 31px; font-weight: 600; letter-spacing: .15px; }

/* dock */
.dock {
  flex: none;
  width: 2692px;
  height: 134px;
  margin: 8px 0 0 94px;
  padding: 18px;
  display: flex;
  align-items: flex-start;
  border: 2px solid #40354c;
  border-radius: 48px;
  background: linear-gradient(90deg, #1a142a, #1d1234 35%, #20123c 58%, #3c1256 66%, #401360 75%, #2a1248 84%, #1e1134 100%);
}
.app { position: relative; flex: none; width: 84px; height: 84px; margin-right: 28px; }
.app.nudge { margin-left: 2px; }
.app > svg { width: 84px; height: 84px; overflow: visible; }
.petals rect { mix-blend-mode: multiply; }
.app.open::after { content: ""; position: absolute; left: 38px; top: 102px; width: 8px; height: 8px; border-radius: 50%; background: #a994cb; }
.badge { position: absolute; right: -13px; top: -10px; width: 39px; height: 39px; border-radius: 20px; background: #de4c3f; color: #fff; font-size: 22px; line-height: 39px; text-align: center; }
.badge.wide { width: 74px; right: -12px; letter-spacing: -.9px; }
.calendar { width: 84px; height: 84px; border-radius: 19px; overflow: hidden; background: #fafaf8; text-align: center; color: #222; }
.calendar b { display: block; height: 26px; background: #e15c50; color: #fff; font-size: 17px; line-height: 28px; }
.calendar span { display: block; font-size: 52px; font-weight: 300; line-height: 54px; letter-spacing: -1px; }
.ce { position: absolute; left: 45px; top: 50px; width: 30px; text-align: center; color: #fff; font-size: 18px; line-height: 20px; letter-spacing: -1px; }
.bar { width: 2px; height: 98px; margin-top: -2px; background: #54406c; }
.bar1 { margin-left: 12px; margin-right: 36px; }
.bar2 { margin-left: 10px; margin-right: 31px; }
.mini { position: relative; margin: 5px 26px 0 0; }
.mark { position: absolute; right: 2px; bottom: -10px; }
.trash { margin-top: -9px; }
```
